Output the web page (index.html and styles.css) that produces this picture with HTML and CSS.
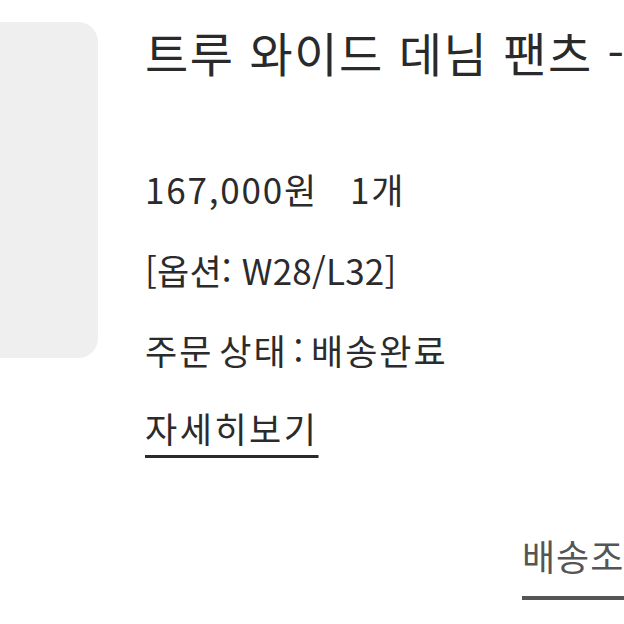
FILE: index.html
```html
<!DOCTYPE html>
<html lang="ko">
<head>
<meta charset="utf-8">
<link rel="stylesheet" href="styles.css">
</head>
<body>
<div class="page">
  <div class="item">
    <div class="thumb"></div>
    <div class="info">
      <div class="title">트루 와이드 데님 팬츠 -</div>
      <div class="line price">167,000원<span class="qty">1개</span></div>
      <div class="line option">[옵션: W28/L32]</div>
      <div class="line status">주문 상태 : 배송완료</div>
      <div class="line"><a class="more">자세히보기</a></div>
    </div>
  </div>
  <div class="tabs">
    <div class="tab">배송조회</div>
  </div>
</div>
</body>
</html>
```
FILE: styles.css
```css
html, body {
  margin: 0;
  padding: 0;
  background: #ffffff;
}
body {
  width: 624px;
  height: 624px;
  overflow: hidden;
  font-family: "Noto Sans CJK KR", "Noto Sans", sans-serif;
  color: #2b2b2b;
}
.page {
  display: flex;
  flex-direction: column;
}
.item {
  display: flex;
  align-items: flex-start;
  gap: 47px;
  padding-top: 22px;
}
.thumb {
  flex: 0 0 98px;
  height: 336px;
  background: #efefef;
  border-radius: 0 20px 20px 0;
}
.info {
  display: flex;
  flex-direction: column;
  white-space: nowrap;
  min-width: 0;
}
.title {
  font-size: 47px;
  line-height: 56px;
  margin-top: 2px;
  letter-spacing: 1.6px;
  color: #2a2a2a;
}
.line {
  font-size: 35px;
  line-height: 40px;
  margin-top: 38px;
  letter-spacing: 2.5px;
}
.price {
  margin-top: 89px;
  letter-spacing: 1.8px;
}
.qty {
  margin-left: 32px;
}
.option {
  margin-top: 41px;
  letter-spacing: 0.2px;
}
.status {
  margin-top: 40px;
  word-spacing: -6px;
  letter-spacing: 2px;
}
.more {
  text-decoration: underline;
  text-decoration-thickness: 3px;
  text-underline-offset: 12px;
  color: #2b2b2b;
}
.tabs {
  display: flex;
  margin-top: 85px;
  padding-left: 522px;
  overflow: hidden;
}
.tab {
  font-size: 36px;
  line-height: 44px;
  color: #555555;
  white-space: nowrap;
  letter-spacing: 1px;
  padding-bottom: 19px;
  border-bottom: 4px solid #555555;
}
```
